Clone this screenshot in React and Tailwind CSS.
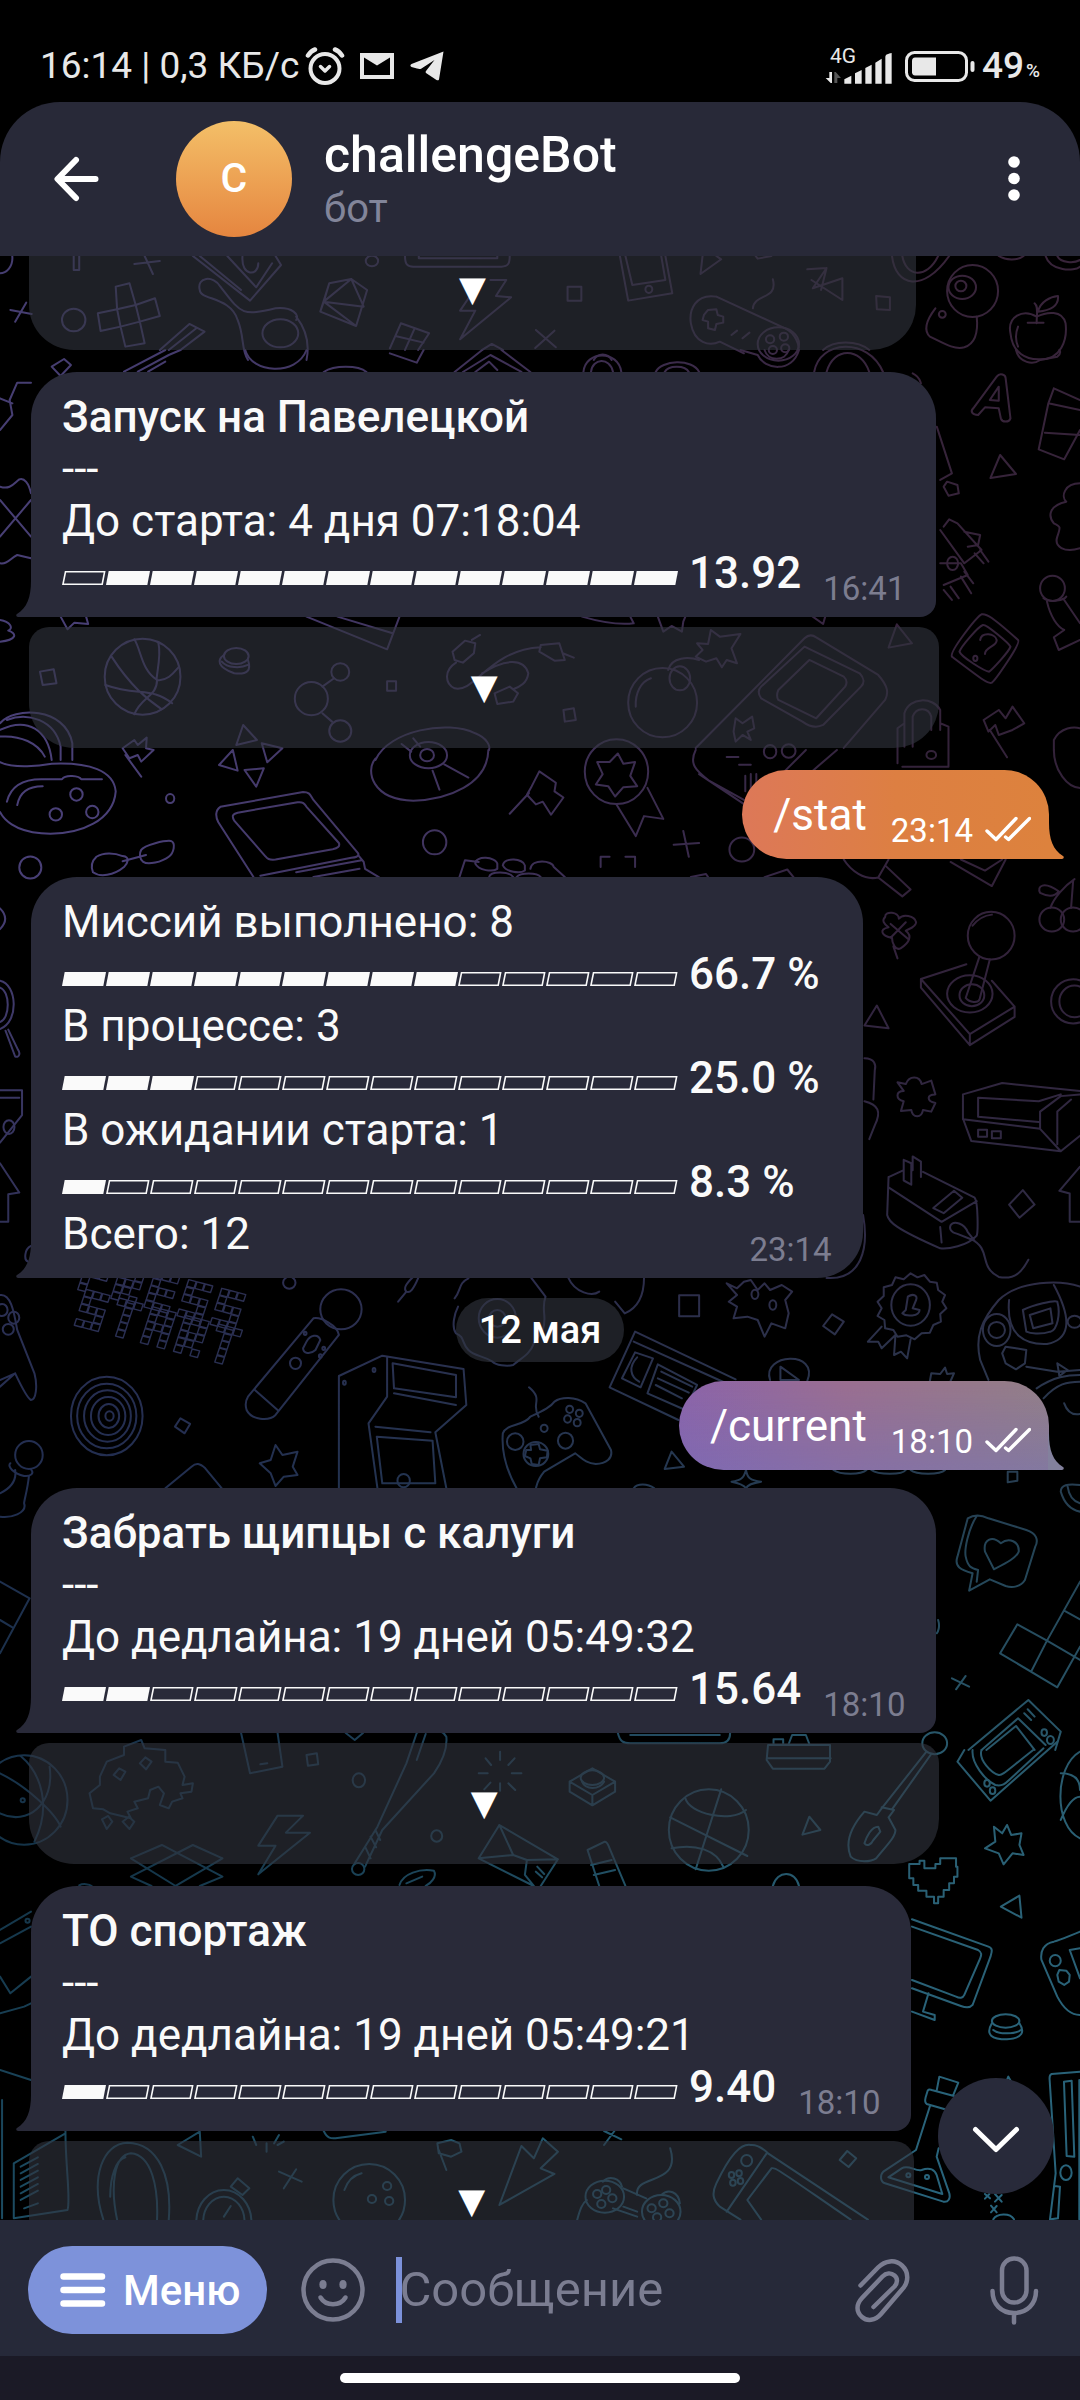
import React from "react";

/* Wallpaper doodles, grouped in horizontal bands. Each band has its own
   coordinate system: [offset x, offset y, scale x, scale y]. */
const BANDS = [
  {
    t: "translate(0 0) scale(0.6888 0.3333)",
    d: [
      "M107 768V810H115V768",
      "M195 792L232 783M210 768L222 822M15 930L46 942M38 908L22 965",
      "M280 768L363 902L408 795L400 768M290 768L350 870M330 768L372 862L395 790M352 770C350 830 375 830 375 790",
      "M588 768C588 795 592 800 600 800H728C738 800 740 790 740 768M608 768V775H722V768",
      "M900 768L912 902L976 880L966 768M908 768L918 855L966 840L960 768",
      "M1020 768L1017 822L1047 778L1040 768M1097 768L1100 776L1120 768",
      "M1172 808L1200 804L1180 865L1223 835V900L1178 840M1200 804L1192 870",
      "M1295 768C1300 860 1340 880 1378 768M1310 768C1315 830 1345 840 1362 768M1450 768C1460 782 1478 782 1486 768M1518 768C1525 815 1560 815 1568 800M1535 768C1540 790 1560 790 1568 780",
      "M1358 925C1345 960 1340 990 1350 1010C1370 1030 1385 1050 1400 1042C1418 1030 1420 990 1418 950",
      "M1505 950C1485 925 1462 950 1467 1000C1470 1060 1490 1080 1510 1078C1540 1080 1550 1020 1547 970C1542 930 1520 935 1505 950M1492 968H1515M1505 970C1505 940 1508 920 1502 910M1507 935C1510 905 1525 890 1536 888C1537 910 1530 930 1507 935M1478 1040C1474 1020 1474 1000 1478 980",
      "M168 860L188 850L197 915L225 895L232 948L203 965L210 1030L182 1040L175 980L146 993L142 940L170 928ZM170 928L175 980L203 965L197 915Z",
      "M290 870C285 830 310 825 320 860C350 940 350 950 400 925C425 920 435 945 430 960M290 870C290 900 335 890 345 960C355 1010 350 1050 360 1080M430 950C445 990 450 1030 445 1080",
      "M478 850L510 837L533 870L517 978L465 935ZM478 850L470 905L517 978M465 935L470 905L510 837L528 920L470 905",
      "M712 840H735L720 888L742 892L668 1018L690 932H668L685 880",
      "M824 860H844V902H824Z",
      "M1040 890C1010 880 1000 930 1003 970C1008 1030 1030 1040 1045 1025L1080 1060M1040 890L1140 985C1155 1000 1162 1040 1158 1050M1028 930L1040 928L1042 945L1050 950V968L1040 972L1038 990L1028 985V965L1020 960L1022 945ZM1093 925C1095 880 1130 900 1122 838M1062 1005L1070 992M1078 1015L1088 998",
      "M1272 888L1292 892V930L1273 928Z",
      "M582 970L623 1000L607 1050M582 970L566 1045M602 985L588 1050M574 1008L615 1028",
      "M778 990L807 1042M805 992L777 1044",
      "M232 1050L275 972L297 995L262 1050M245 1050L285 985",
      "M700 1050L714 1032L730 1050M1195 1050C1210 1020 1245 1020 1262 1050M862 1080C868 1058 882 1058 888 1080",
    ],
    e: [
      [0, 775, 18, 45], [540, 783, 9, 16], [942, 868, 5, 11], [1412, 873, 37, 78], [1397, 862, 20, 35], [1395, 858, 8, 16],
      [1368, 943, 5, 10], [107, 960, 17, 34], [407, 1000, 26, 42], [1130, 1032, 30, 50], [1118, 1018, 6, 12], [1138, 1010, 6, 12],
      [1122, 1050, 6, 12], [1140, 1045, 6, 12],
    ],
  },
  {
    t: "translate(0 350) scale(0.6888 0.3333)",
    d: [
      "M75 50L93 27L103 45L88 78Z",
      "M180 65L240 0M200 65L245 15L262 0M215 65L240 35",
      "M356 0C365 70 430 80 445 0M566 10L605 38L615 0",
      "M660 66L700 0M728 0L770 66M672 66L712 15L757 66M690 66L710 35L722 60",
      "M470 66C485 45 520 45 532 66M847 66C850 0 898 0 902 66M858 66C860 25 885 20 890 66M952 66C960 30 1005 25 1015 66M965 66C970 45 995 45 1000 66",
      "M1075 0L1100 15C1110 60 1150 70 1160 0M1110 0C1115 35 1140 35 1145 0",
      "M1182 66C1190 -30 1260 -40 1282 66M1200 66C1210 -10 1250 -10 1262 66",
      "M1447 80C1452 66 1460 75 1460 85L1467 205C1465 218 1455 218 1453 205L1450 175L1430 172L1420 195C1412 195 1408 185 1413 175ZM1450 110L1437 150L1450 152Z",
      "M1530 115L1568 150M1530 115L1522 160L1568 180M1522 160L1508 298L1545 328L1568 240M1517 248L1568 255",
      "M1452 315L1475 372L1438 384Z",
      "M1475 0C1480 40 1500 45 1510 30L1535 20C1542 10 1538 0 1538 0",
      "M0 240L18 195L14 150L25 98H45M0 145L18 160",
      "M0 410C15 420 20 400 28 388C35 382 42 400 45 430M0 450L45 560M0 560L45 450M0 640C10 645 15 625 25 615L45 625",
      "M1325 70C1335 80 1335 90 1337 100M1360 230L1382 370L1365 390M1375 395L1390 405L1392 430L1377 437L1370 410Z",
      "M1370 530L1378 508L1390 520L1425 600L1400 640L1365 540M1400 545L1423 555L1420 585L1405 590M1365 640H1395L1405 675L1370 705M1415 610L1428 640M1423 600L1435 635M1395 680L1410 730M1400 665L1413 700M1370 720L1382 750M1380 710L1392 745",
      "M1568 400C1545 400 1540 440 1548 455C1525 465 1520 495 1530 520C1540 530 1540 530 1535 560C1530 590 1545 610 1568 595",
      "M1515 745C1525 760 1545 750 1548 740M1520 755C1525 800 1535 830 1545 840L1530 862L1537 900L1568 870M1545 750L1568 820",
      "M1425 793C1432 790 1440 800 1478 870C1483 880 1445 990 1440 998C1435 1003 1430 995 1382 920C1378 905 1418 800 1425 793ZM1427 825C1432 822 1465 880 1467 890C1465 905 1440 960 1436 965C1430 965 1395 920 1393 905C1395 890 1420 830 1427 825ZM1423 870C1425 845 1445 850 1447 870C1448 890 1430 890 1430 912",
      "M195 868C205 900 205 960 228 990C228 1040 205 1040 195 1093M162 920C190 1010 215 1050 235 1078M153 1005C200 1040 220 1010 250 1060M230 880C235 920 225 990 228 990C245 995 255 960 260 950",
      "M325 915C315 930 315 950 340 970C360 975 365 960 360 930M322 935C330 955 350 955 360 945",
      "M58 965L78 958L82 1000L62 1005Z",
      "M445 800L562 898L580 800M490 800L570 850M88 800L98 838L108 818L128 822L125 800M0 810C15 815 20 835 12 842C25 850 25 870 0 875",
      "M485 985L468 1010M468 1090L482 1115M562 994H575V1022H562Z",
      "M662 938C645 960 645 1000 660 1015C690 1030 710 900 785 892M700 970C730 930 760 920 767 970C765 1000 755 1010 745 1018M660 930L657 905L675 872L690 880L688 910L672 938ZM685 870L697 855M785 885L812 880L820 930L805 932L783 905ZM817 910L833 923M740 1010L752 1030L745 1055L722 1062L718 1030Z",
      "M818 1080L833 1075L836 1110L820 1115Z",
      "M923 1070C922 1030 930 995 945 985M970 960C975 920 1000 920 1015 930M1010 920L1020 900L1012 880L1028 882L1032 840L1045 860L1075 852L1062 895L1070 940L1055 930L1048 952L1040 925L1025 935Z",
      "M955 800L963 845L975 828L990 845L992 815L995 800M845 800C870 815 900 825 920 820L915 800M1180 800L1195 822L1198 800M1302 823L1324 880L1290 893Z",
      "M1225 1194L1285 1050C1290 1030 1290 1010 1275 975L1185 862C1178 852 1172 857 1168 865L1010 1194",
      "M1168 890L1248 970C1255 985 1255 1000 1250 1010L1195 1125C1185 1135 1175 1130 1165 1115L1105 1045C1100 1030 1100 1020 1105 1010ZM1175 930L1225 980C1230 990 1230 1000 1227 1010L1185 1105L1130 1050C1127 1040 1128 1030 1130 1020Z",
      "M1068 1105L1078 1120L1092 1100L1095 1135L1085 1145L1090 1170L1078 1155L1068 1175L1065 1145Z",
      "M1303 1240V1135L1313 1120M1313 1190V1090C1320 1040 1355 1040 1365 1080V1140M1325 1190V1100C1330 1070 1348 1070 1352 1100V1140M1365 1120L1377 1130V1250H1310",
      "M1428 1110L1450 1080L1460 1105L1470 1070L1487 1120L1470 1140L1450 1155L1445 1125L1435 1145ZM1437 1140L1462 1222",
      "M1530 1170C1540 1130 1560 1130 1568 1135M1530 1170V1200",
      "M0 1120C20 1070 95 1070 105 1180V1230M10 1110C40 1085 80 1110 88 1190V1230M0 1140C40 1100 70 1140 75 1230M0 1160C30 1155 55 1180 65 1220",
      "M178 1195L195 1170L200 1185L213 1163L212 1195L223 1200L205 1235L200 1215L188 1225ZM182 1215L205 1280",
      "M353 1125L373 1170L343 1185ZM380 1180L410 1195L388 1237ZM338 1200L318 1245L345 1262ZM355 1260L383 1255L372 1310Z",
      "M545 1230C565 1140 650 1110 690 1150C708 1165 712 1190 710 1200M583 1182L597 1205M600 1165L610 1190",
    ],
    e: [
      [1383, 640, 8, 20], [1528, 715, 18, 38], [1416, 925, 3, 8], [207, 980, 55, 114], [343, 918, 18, 24], [494, 966, 13, 26],
      [452, 1046, 24, 50], [494, 1143, 16, 32], [962, 1058, 50, 104], [987, 985, 15, 36], [1118, 1205, 9, 20], [1145, 1203, 10, 20],
      [1352, 1215, 7, 12],
    ],
  },
  {
    t: "translate(0 750) scale(0.6888 0.3444)",
    d: [
      "M0 35C20 55 60 45 75 40C130 35 165 60 168 120C165 200 120 250 60 242C20 235 5 200 0 180M10 150C15 110 30 85 60 85H90C95 70 115 75 118 85H148M25 160C28 125 40 105 62 105",
      "M320 165L440 122C450 122 450 130 455 145L520 300C522 310 515 312 510 313L378 365M320 165C312 175 313 195 317 210L368 369M345 182L432 152C440 150 442 155 445 165L492 270C494 280 490 285 483 288L400 318C390 320 388 315 385 308L340 205C336 190 338 186 345 182ZM520 305L528 325L530 345L550 369M430 355L525 320M455 369L522 345",
      "M140 310C150 298 165 298 178 308C190 310 185 330 180 340C165 365 145 370 135 355C132 340 132 325 140 310ZM205 290C210 275 240 262 248 264C256 270 252 300 245 310C235 325 215 335 208 325C202 315 202 300 205 290ZM178 323L212 305",
      "M545 25C530 60 540 145 600 147C650 145 708 100 709 0M628 60L638 115M645 42L680 80",
      "M783 62L807 95L805 120L818 138L800 188L788 150L778 158L765 130L772 105ZM768 125L740 185",
      "M897 10L905 40L922 35L915 75L925 105L905 108L893 135L883 105L865 100L875 70L867 35L885 35ZM895 158L923 250L935 192L963 200L940 110",
      "M1010 0C1000 40 1010 60 1030 90L1080 145M1015 70L1090 170M1055 20H1072M1073 43H1090M1082 75V120M1090 70V120M1098 70V110M1140 60L1170 0M1180 60L1215 0",
      "M667 369L675 320L695 325M690 330C690 305 720 310 722 330V345C715 355 695 350 690 330M730 335C732 310 760 315 762 335V350C755 360 735 355 730 335M770 345C772 315 802 320 804 340L820 369M710 369C712 350 740 352 745 369M750 369C755 355 780 355 785 369",
      "M872 340V310H885M908 310H922V340M978 275L1015 270M992 235L1000 310M1003 369L1025 360L1028 369M1110 369L1143 347L1152 369",
      "M1225 318C1235 350 1255 380 1275 370L1290 318M1275 370L1310 425L1322 405L1285 335M1380 325L1440 395L1460 318M1395 318L1430 350L1455 318",
      "M1530 0C1530 60 1550 110 1568 110",
      "M1525 458C1530 430 1545 395 1560 375M1555 458L1558 380M1537 410C1515 380 1505 395 1510 415C1520 425 1530 430 1537 410",
      "M1285 485C1285 465 1305 470 1305 490C1310 475 1328 480 1330 500C1330 515 1318 520 1315 525C1325 540 1320 560 1308 575C1300 585 1295 560 1295 545C1280 540 1275 520 1290 515C1283 505 1280 495 1285 485ZM1297 570L1303 605M1293 505L1318 548M1315 500L1293 545",
      "M1422 600L1402 720C1408 735 1420 735 1422 725L1437 608M1337 665L1403 622M1440 670L1473 745L1408 825L1337 665V690L1408 857L1473 775V745M1408 825V857M1412 510C1420 490 1430 480 1440 478",
      "M1273 742L1290 808L1255 800Z",
      "M0 460C10 480 10 500 0 520M0 670C25 680 28 790 0 810M0 690C15 700 15 780 0 790M8 815L22 890C28 895 30 880 26 870L12 812",
      "M0 988H32V1060L0 1140M0 1010H28",
      "M1303 965L1315 970C1320 945 1335 945 1338 970L1352 960L1358 1000C1345 1000 1345 1020 1358 1025L1352 1050L1340 1045C1338 1070 1325 1070 1323 1045L1308 1048L1312 1020C1300 1015 1300 990 1312 990Z",
      "M1255 895C1270 895 1272 915 1270 930L1268 1015M1255 1020C1275 1030 1280 1050 1270 1090L1262 1130",
      "M1398 1000L1455 967L1568 990M1398 1000V1070L1410 1135L1540 1165L1568 1120M1398 1072L1510 1100L1540 1165M1510 1100V1050L1540 1005L1568 1000M1420 1010L1508 1020L1540 1000M1420 1010V1065L1508 1080M1535 1145V1050L1555 1015M1420 1103H1433V1123H1420ZM1440 1107H1453V1127H1440Z",
      "M1290 1240L1312 1220M1340 1225L1415 1300C1420 1310 1420 1400 1418 1410C1405 1440 1375 1450 1365 1447C1300 1390 1290 1370 1288 1350L1290 1240M1290 1270L1367 1370L1418 1310M1312 1250V1190L1323 1200V1262L1312 1250M1325 1220V1180L1337 1195V1240M1365 1385L1367 1430M1355 1330L1385 1280L1397 1300L1370 1345ZM1380 1380C1385 1365 1400 1375 1405 1400L1415 1425L1390 1405C1380 1400 1378 1390 1380 1380M1410 1420C1440 1450 1420 1500 1450 1530C1475 1540 1485 1510 1493 1480",
      "M1465 1320L1485 1278L1502 1320L1480 1358ZM0 1200L28 1285L12 1290V1370H0M1568 1210L1538 1280L1553 1288V1370H1568",
      "M1200 1533C1250 1540 1262 1450 1253 1350M45 1440C35 1450 35 1480 40 1485",
    ],
    e: [
      [111, 129, 9, 18], [81, 187, 9, 18], [134, 180, 9, 18], [247, 141, 6, 13], [44, 341, 16, 32], [622, 15, 27, 38],
      [620, 15, 10, 18], [895, 63, 46, 94], [631, 268, 17, 35], [1077, 289, 18, 35], [1527, 492, 18, 35], [1558, 492, 18, 35],
      [1439, 539, 34, 69], [1408, 708, 33, 54], [1411, 712, 18, 32], [1558, 730, 32, 64], [1560, 730, 22, 46], [13, 1095, 8, 20],
    ],
  },
  {
    t: "translate(0 1270) scale(0.6888 0.3333)",
    d: [
      "M608 20C600 60 595 70 590 65C585 55 590 40 600 20M590 65L578 95",
      "M0 75C15 70 20 120 25 180L50 310C55 350 52 390 45 390C40 385 30 345 22 310L0 350M0 330L22 310",
      "M262 445L276 462L268 490L254 470Z",
      "M455 145C465 140 490 165 492 195L400 435C390 455 365 450 358 420C355 400 357 390 360 380ZM370 360L403 420M445 215C450 195 462 190 465 210L458 240C450 255 440 250 440 235Z",
      "M15 580C10 590 20 610 35 618C45 620 50 610 45 598M22 600C25 640 10 660 0 670M42 618C40 660 35 690 35 700C40 730 15 745 0 740",
      "M492 655V318L555 257L673 297L677 405L632 487L648 655M562 262V380L535 460L548 655M570 280L662 315V382L572 355ZM572 370L662 405M545 470L625 487M547 500L628 512L632 640H555Z",
      "M400 525L410 555L432 545L425 590L432 615L412 620L400 648L393 610L377 580L393 570Z",
      "M240 655L278 590C285 578 290 580 298 595L322 655",
      "M750 655C735 600 728 540 730 490C735 460 760 470 770 440C790 420 800 410 805 395C815 380 835 380 850 400L887 540C890 565 880 582 865 582C850 580 845 565 835 550L790 605C780 630 780 640 778 655M768 352C790 390 770 400 782 440M770 525L782 522L784 538L795 542L794 562L784 565L782 585L772 582L770 565L762 558L764 540L771 540Z",
      "M660 85C670 60 665 40 680 25M770 20L792 80C785 120 795 140 788 180L775 220C770 250 760 260 745 285C735 290 720 285 715 275C700 255 690 260 680 240C670 220 675 200 662 190C655 170 660 130 665 110",
      "M825 23C835 70 860 80 870 65M907 130C930 110 935 60 935 23M893 95L907 130M986 76H1015V139H986Z",
      "M985 450L885 352L922 185L1068 328M920 215L1060 345M922 247L948 265L930 352L903 325ZM925 262C912 290 915 320 928 335M955 283L1012 345L995 420L940 370ZM960 305L1005 350M955 325L1000 368M952 345L990 385",
      "M1055 40L1070 55L1080 35L1090 30L1100 60L1110 40L1118 60L1135 45L1150 65L1140 90L1145 130L1140 175L1120 160L1110 200L1100 150L1085 140L1065 145L1070 110L1058 95L1070 75Z",
      "M1208 133L1225 155L1212 193L1195 168Z",
      "M1322 10L1332 22L1342 15L1350 35L1360 38L1362 60L1372 75L1368 95L1374 115L1365 132L1366 155L1355 165L1350 188L1338 190L1328 208L1316 196L1303 200L1297 180L1285 175L1284 150L1274 138L1280 115L1274 95L1283 78L1283 52L1295 45L1300 22L1312 28ZM1280 170L1260 215L1275 215L1280 235L1300 195L1298 255L1308 245L1317 265L1322 208M1318 80C1325 70 1333 75 1330 90L1325 115L1335 120C1335 140 1315 140 1310 130L1315 120Z",
      "M1435 330L1423 270C1415 200 1425 150 1450 90C1480 30 1540 30 1568 50M1465 90C1460 200 1490 225 1520 222C1550 210 1560 160 1530 45M1485 120C1500 105 1530 90 1535 95C1540 130 1535 180 1525 185C1510 195 1495 190 1490 185ZM1495 135L1525 115L1528 160L1500 175ZM1460 230L1475 235L1490 240L1488 280L1475 298L1460 280L1455 250ZM1490 290L1535 305L1568 300M1535 280L1550 300L1538 318Z",
      "M1505 355C1530 320 1550 315 1568 315M1515 385C1535 340 1550 335 1568 335M1545 400C1550 430 1560 435 1568 432",
      "M1118 330C1105 250 1190 240 1172 333M1133 290L1160 330H1133ZM1350 333L1352 310L1365 312L1372 293L1375 312L1385 310L1380 333",
      "M975 545L993 590L965 597ZM1083 600C1085 625 1090 632 1105 635C1090 640 1085 645 1083 655C1080 645 1075 640 1062 635C1075 632 1080 625 1083 600M920 655C925 640 940 640 950 655",
      "M1210 600C1220 615 1250 615 1258 600M1265 600C1275 615 1310 615 1315 600M1322 600C1330 615 1365 615 1372 600M1463 605H1477V632L1463 637Z",
      "M1568 645C1550 640 1540 645 1540 665C1545 700 1555 720 1568 725M1550 650C1552 680 1560 695 1568 700",
      "M1405 745C1415 732 1425 735 1435 745L1490 780C1505 790 1508 810 1503 830L1488 930C1482 950 1470 955 1460 948L1437 928L1407 962L1412 910C1395 900 1385 890 1390 860ZM1418 738C1405 780 1400 840 1402 860C1405 890 1410 895 1420 900L1418 935M1443 898L1430 845C1427 810 1440 795 1453 820C1465 800 1480 815 1479 845C1475 865 1460 880 1443 898Z",
      "M1568 935L1520 1112L1477 1063L1452 1150L1535 1252L1568 1130M1520 1112L1497 1205M1545 1022L1568 1048M1520 1112L1568 1170",
      "M1382 1225L1407 1250M1402 1218L1388 1258",
      "M1406 1440L1493 1290L1540 1385L1532 1440M1425 1440L1478 1345L1518 1425M1432 1440L1475 1368L1502 1440M1487 1330L1497 1350M1492 1318L1502 1340",
      "M0 935L43 985L0 1150M0 1050L18 1072M1362 1050C1365 1070 1362 1085 1360 1090",
    ],
    e: [
      [420, 38, 9, 18], [3, 120, 8, 18], [20, 143, 8, 18], [12, 178, 8, 16], [155, 438, 52, 118], [155, 438, 43, 97],
      [156, 438, 34, 77], [157, 438, 25, 57], [158, 438, 15, 36], [159, 438, 6, 14], [495, 118, 30, 60], [429, 280, 8, 17],
      [465, 258, 2, 5], [443, 190, 2, 5], [470, 235, 2, 5], [42, 555, 20, 42], [586, 632, 9, 20], [543, 300, 2, 6],
      [500, 338, 2, 6], [748, 515, 12, 25], [821, 512, 11, 24], [790, 475, 5, 11], [827, 418, 5, 11], [841, 430, 5, 11],
      [824, 447, 5, 11], [838, 458, 5, 11], [778, 552, 18, 36], [722, 145, 27, 58], [722, 145, 12, 25], [1096, 73, 5, 14],
      [1122, 105, 5, 14], [1322, 105, 28, 62], [1447, 180, 20, 48], [1447, 180, 12, 24], [1560, 155, 10, 18], [1516, 1388, 4, 10],
      [1525, 1410, 5, 12],
    ],
  },
  {
    t: "translate(0 1730) scale(0.6888 0.3333)",
    d: [
      "M205 30L210 55L240 60V95L258 98L268 140L265 165L280 160L278 185L262 190L265 205L250 215L245 235L232 225L238 190L230 170L218 180L215 205L195 215L200 235L185 245L190 265L160 250L150 238L135 235L130 190L145 165V140L155 95L180 75V50ZM165 135L173 115L182 125L175 150ZM203 100L211 82L220 95L212 118ZM148 268L157 258L163 275L155 297ZM178 275L187 260L195 275L188 297Z",
      "M0 250C40 290 80 220 72 110M0 130C40 170 80 250 88 290M30 78C60 130 75 230 50 335",
      "M350 9L363 130L410 110L403 9M378 103L388 100M445 75L460 70L462 103L447 107ZM502 9L515 30L527 9",
      "M605 9C612 -5 640 -10 648 20C650 60 640 100 630 130L555 300L530 410M605 9L590 100L548 290L515 400M545 300L552 330M538 320L546 352M530 350L538 385M605 90L618 12",
      "M403 257H440L415 308H450L375 433L400 347H375Z",
      "M190 385L235 345L323 440L290 468M323 385L280 345L190 440L220 468M190 385L255 468L323 385",
      "M726 65V90M726 160V182M695 130H708M743 130H757M705 85L713 105M747 85L738 105M703 178L712 158M748 180L738 160",
      "M785 468L810 388L725 285L695 385L775 468M695 385L745 375L725 285M745 375L765 390L810 388M765 390L762 435L775 468M780 410L790 432M778 425L787 442",
      "M580 465C585 430 610 415 630 422C635 440 625 460 618 468M590 460L613 440",
      "M870 468L853 360L878 335C882 335 883 345 885 355L908 468M858 405L888 390M862 435L893 420",
      "M827 155L860 115L893 155V185L860 226L827 185ZM827 155L860 195L893 155M860 195V226M845 155C850 180 870 180 877 155",
      "M1047 178L1010 418M973 262L1085 378M995 205C1000 250 1060 280 1083 240M975 355C1010 340 1040 360 1050 410",
      "M1175 260L1191 300L1165 314Z",
      "M1115 45H1205V95L1197 116H1122L1113 90ZM1113 85H1206M1123 45V28H1137V42M1145 42L1150 15H1170L1175 42M897 9C900 35 905 40 915 40H1045C1055 40 1060 30 1060 9M915 15H1045",
      "M1345 65L1280 235M1352 72L1295 238M1280 232L1298 240L1290 262M1280 235L1273 255L1255 245C1240 280 1225 330 1235 380C1245 400 1265 395 1272 385C1290 340 1300 320 1300 300L1290 262M1275 290C1265 290 1258 320 1255 340C1258 350 1265 345 1268 330L1278 305Z",
      "M1400 60L1390 95L1438 212L1535 35M1412 60C1410 100 1430 150 1445 165C1455 170 1460 160 1465 150L1515 55M1425 60C1420 90 1440 130 1450 135C1455 137 1460 125 1500 60",
      "M1568 65C1530 110 1530 290 1568 325M1540 130C1560 130 1568 150 1568 180M1540 270C1550 220 1560 200 1568 200",
      "M1462 285L1468 315L1483 310L1480 345L1486 375L1470 370L1457 403L1450 370L1430 355L1445 335L1443 290L1455 310Z",
      "M1320 420V402H1335V392H1342V415H1358V402H1365V385H1388V410H1390V440H1385V460H1378V480H1370V500H1362V520H1356V500H1345V482H1333V465H1326V445H1320Z",
      "M1480 497L1483 563L1453 530ZM1122 468C1128 420 1155 420 1160 468",
      "M1324 568L1435 650C1442 655 1440 665 1438 680L1412 825C1408 835 1400 832 1395 828L1324 775M1324 590L1420 660C1426 668 1425 675 1423 685L1400 795C1398 805 1393 805 1388 800L1324 750M1348 790L1340 845L1357 855V870L1324 845",
      "M1568 605C1550 620 1540 630 1530 635C1515 640 1510 665 1512 690L1535 800C1545 840 1555 855 1568 855M1568 655L1553 660L1568 745M1538 720L1548 722L1553 735L1552 755L1545 765L1537 755L1535 735Z",
      "M1440 880C1430 915 1440 928 1462 928C1485 925 1488 905 1480 880M1442 900C1450 915 1475 912 1482 900",
      "M0 600L45 545M0 640L45 590M0 740L15 790L45 740M0 850L35 830L45 820M0 1020L45 1050M115 466C120 460 130 462 133 468",
    ],
    e: [
      [35, 210, 63, 134], [33, 211, 3, 6], [521, 151, 9, 21], [520, 417, 9, 18], [634, 318, 8, 17], [860, 143, 17, 22],
      [1029, 300, 58, 122], [1357, 40, 18, 33], [1433, 160, 4, 10], [1441, 182, 4, 10], [1532, 692, 8, 17], [1460, 873, 20, 20],
      [40, 572, 3, 6],
    ],
  },
  {
    t: "translate(0 2100) scale(0.6888 0.3333)",
    d: [
      "M3 0V355M20 190L95 100M20 190V355L98 330C103 300 95 200 95 93M30 200L55 172M30 220L55 192M30 240L55 212M30 260L55 232M30 280L55 252M30 300L55 272M35 325L55 310",
      "M150 359C130 230 150 130 185 128C230 130 250 230 245 359M170 359C160 260 165 165 190 160C220 165 230 260 228 359M160 290C160 230 168 180 182 172",
      "M290 95L258 135L292 170ZM387 130V155M367 110L372 135M405 105L398 130M412 125L403 135",
      "M325 350L335 318M335 260L345 235L362 265L352 285Z",
      "M405 215L438 245M430 208L412 265M500 270C505 240 515 225 525 220",
      "M635 130L655 120L667 130L670 155L655 170L637 160ZM637 150L648 210M470 93C475 115 480 117 490 114L560 95M877 93L902 118M892 93L877 135",
      "M757 138L775 175L788 115L810 155L785 205L805 222L725 315Z",
      "M838 359C842 330 845 310 852 300M905 265L938 295M875 245C885 225 900 235 903 260M960 285C970 265 985 275 987 310M925 285C920 220 990 260 973 145M890 325L925 350M905 320L925 335",
      "M1090 135C1075 130 1060 165 1040 250C1033 280 1035 300 1045 320L1075 359M1090 135C1100 133 1110 150 1115 160L1260 359M1113 160L1055 335M1120 205C1125 200 1130 210 1235 359M1120 205L1085 300L1105 359",
      "M1230 153L1243 175L1232 201L1219 180Z",
    ],
    e: [
      [325, 365, 40, 95], [325, 365, 30, 75], [536, 300, 52, 108], [562, 258, 6, 12], [540, 297, 6, 12], [565, 303, 6, 12],
      [878, 290, 28, 48], [960, 335, 28, 50], [880, 270, 6, 12], [867, 282, 6, 12], [889, 295, 6, 12], [873, 312, 6, 12],
      [963, 310, 6, 12], [946, 325, 6, 12], [972, 340, 6, 12], [954, 352, 6, 12], [1084, 182, 8, 17], [1062, 225, 4, 9],
      [1073, 220, 4, 9], [1064, 248, 4, 9], [1075, 243, 4, 9],
    ],
  },
  {
    t: "translate(830 2060) scale(0.3333 0.3333)",
    d: [
      "M345 148L290 132C284 128 285 120 287 112L293 92C296 88 300 88 305 90L372 108M320 92L328 50L385 68L370 105M300 138L258 270L160 335C150 345 150 365 165 370L340 425C355 428 362 415 358 400L320 290L326 265",
      "M175 352L215 325C235 312 255 335 275 330C300 320 315 330 320 345L337 402Z",
      "M465 402L480 415M478 402L465 416M495 402L515 425M515 405L495 425M483 437L500 457M500 438L483 457M490 478C500 460 540 458 552 478M535 50L530 62M535 50L542 62",
      "M750 35L665 42C658 44 658 50 659 60L677 340L660 478M702 65L725 62L733 290L710 288ZM675 378L690 380L684 475L662 478M748 60V478",
    ],
    e: [[235, 346, 6, 6], [291, 351, 6, 6], [708, 338, 17, 22]],
  },
];

/* Pixel-block lettering of the wallpaper, row by row. */
const BLOCKS = [
  { m: "matrix(12 6.5 -3.5 22 130 -49)", rows: ["111.111.111.111.111", "1.1.1.1.1...1...1..", "111.111.111.111.111", "1...11..1.....1...1", "1...1.1.111.111.111"] },
  { m: "matrix(12 6.5 -3.5 22 125 58)", rows: ["111.111.111.111.111", "1....1..1.1.1.1..1.", "111..1..111.111..1.", "..1..1..1.1.11...1.", "111..1..1.1.1.1..1."] },
];

function Wallpaper() {
  return (
    <svg className="absolute inset-0 h-full w-full" viewBox="0 256 1080 1964" preserveAspectRatio="xMidYMin slice" aria-hidden="true">
      <defs>
        <linearGradient id="wl" x1="0" y1="0" x2="0" y2="1">
          <stop offset="0" stopColor="#453d70" />
          <stop offset="0.3" stopColor="#4a4078" />
          <stop offset="0.5" stopColor="#2f3055" />
          <stop offset="0.62" stopColor="#222e50" />
          <stop offset="0.82" stopColor="#143448" />
          <stop offset="1" stopColor="#1c4c62" />
        </linearGradient>
        <linearGradient id="wr" x1="0" y1="0" x2="0" y2="1">
          <stop offset="0" stopColor="#38243a" />
          <stop offset="0.35" stopColor="#32223a" />
          <stop offset="0.52" stopColor="#2e2c46" />
          <stop offset="0.66" stopColor="#244456" />
          <stop offset="0.8" stopColor="#2a6074" />
          <stop offset="1" stopColor="#28647c" />
        </linearGradient>
        <linearGradient id="wf" x1="0" y1="0" x2="1" y2="0">
          <stop offset="0.1" stopColor="#000" />
          <stop offset="0.85" stopColor="#fff" />
        </linearGradient>
        <mask id="wside" maskUnits="userSpaceOnUse" x="0" y="256" width="1080" height="1964">
          <rect x="0" y="256" width="1080" height="1964" fill="url(#wf)" />
        </mask>
        <mask id="wlines" maskUnits="userSpaceOnUse" x="0" y="256" width="1080" height="1964">
          <g fill="none" stroke="#fff" strokeWidth="2" strokeLinecap="round" strokeLinejoin="round">
            {BANDS.map((b) => (
              <g key={b.t} transform={b.t}>
                {b.d.map((d) => (
                  <path key={d} d={d} vectorEffect="non-scaling-stroke" />
                ))}
                {b.e.map(([cx, cy, rx, ry]) => (
                  <ellipse key={`${cx}-${cy}-${rx}`} cx={cx} cy={cy} rx={rx} ry={ry} vectorEffect="non-scaling-stroke" />
                ))}
              </g>
            ))}
            <g transform="translate(0 1270) scale(0.6888 0.3333)">
              {BLOCKS.map((w) => (
                <g key={w.m} transform={w.m}>
                  {w.rows.flatMap((r, y) =>
                    [...r].map((c, x) =>
                      c === "1" ? <rect key={`${x}-${y}`} x={x} y={y} width="0.9" height="0.9" strokeWidth="1.4" vectorEffect="non-scaling-stroke" /> : null
                    )
                  )}
                </g>
              ))}
            </g>
          </g>
        </mask>
      </defs>
      <g mask="url(#wlines)">
        <rect x="0" y="256" width="1080" height="1964" fill="url(#wl)" />
        <rect x="0" y="256" width="1080" height="1964" fill="url(#wr)" mask="url(#wside)" />
      </g>
    </svg>
  );
}

function Bar({ cells, label }) {
  return (
    <svg className="mb-[13px] h-4 w-[616px] shrink-0" viewBox="0 0 616 16" role="img" aria-label={label}>
      {[...cells].map((c, i) =>
        c === "1" ? (
          <path key={i} transform={`translate(${i * 44} 0)`} d="M0 15L2.7 1H44L41.3 15Z" fill="#fafafa" />
        ) : (
          <path key={i} transform={`translate(${i * 44} 0)`} d="M1 14.2L3.5 1.8H42.6L40.2 14.2Z" fill="none" stroke="#fafafa" strokeWidth="1.6" />
        )
      )}
    </svg>
  );
}

function BarLine({ cells, value, children }) {
  return (
    <div className="flex h-[52px] items-end">
      <Bar cells={cells} label={value} />
      <b className="ml-[11px] font-medium">{value}</b>
      {children}
    </div>
  );
}

function Time({ children }) {
  return <time className="-mb-[6px] ml-auto pl-[22px] text-[33px] leading-[33px] text-[#7c7d90]">{children}</time>;
}

function InBubble({ short, children }) {
  return (
    <div
      className={
        short
          ? "relative w-fit rounded-t-[46px] rounded-br-[16px] bg-[#292a39] px-[31px] pb-[18px] pt-[19px] text-[44px] leading-[52px] text-[#fafafa]"
          : "relative w-fit rounded-t-[46px] rounded-br-[46px] bg-[#292a39] px-[31px] pb-[18px] pt-[19px] text-[44px] leading-[52px] text-[#fafafa]"
      }
    >
      {children}
      <svg className="absolute bottom-0 -left-[15px] h-9 w-4" viewBox="0 0 16 36" fill="#292a39" aria-hidden="true">
        <path d="M15 0C15 16 11 27 1 33C-0.5 34 0.5 36 2 36H16V0Z" />
      </svg>
    </div>
  );
}

function KeyButton() {
  return (
    <button className="-ml-[2px] -mr-[3px] mt-[10px] h-[121px] rounded-b-[45px] rounded-t-[20px] bg-[rgba(50,54,64,0.6)] font-['DejaVu_Sans'] text-[35px] text-white">
      ▼
    </button>
  );
}

function Mission({ title, left, cells, value, time }) {
  return (
    <div className="mt-[22px] flex w-fit flex-col">
      <InBubble short>
        <b className="block font-medium">{title}</b>
        <p>---</p>
        <p>{left}</p>
        <BarLine cells={cells} value={value}>
          <Time>{time}</Time>
        </BarLine>
      </InBubble>
      <KeyButton />
    </div>
  );
}

function OutBubble({ look, tail, text, time }) {
  return (
    <div className={look}>
      <span>{text}</span>
      <time className="-mb-[6px] ml-[24px] text-[33px] leading-[33px]">{time}</time>
      <svg className="mb-[-1px] ml-[12px] h-[26px] w-[46px]" viewBox="0 0 46 26" fill="none" stroke="#fff" strokeWidth="3.4" strokeLinecap="round" strokeLinejoin="round" aria-label="Прочитано">
        <path d="M2 15L11 23.5L31 2.5M20.5 21L23.5 23.5L44.500 2.5" />
      </svg>
      <svg className="absolute bottom-0 -right-[15px] h-9 w-4" viewBox="0 0 16 36" fill={tail} aria-hidden="true">
        <path d="M1 0C1 16 5 27 15 33C16.500 34 15.500 36 14 36H0V0Z" />
      </svg>
    </div>
  );
}

export default function App() {
  return (
    <div className="flex h-screen flex-col overflow-hidden bg-black font-[Roboto,sans-serif] text-white">
      <div className="flex h-[102px] shrink-0 items-center justify-between pl-[40px] pr-[40px] pt-[30px] text-[37px] font-medium text-[#e8e8e8]">
        <div className="flex items-center">
          <span className="font-normal">16:14 | 0,3 КБ/с</span>
          <svg className="ml-[5px] h-[38px] w-[42px]" viewBox="0 0 42 38" fill="none" stroke="#e8e8e8" strokeLinecap="round" strokeLinejoin="round" aria-hidden="true">
            <circle cx="21" cy="21.500" r="14.500" strokeWidth="4" />
            <path d="M16.500 19.500L21 24L25.500 19.500" strokeWidth="3.500" />
            <path d="M4 8.500C6 5.500 8 3.500 11 2.500M38 8.500C36 5.500 34 3.500 31 2.500" strokeWidth="4.500" />
          </svg>
          <svg className="ml-[14px] h-[26px] w-[34px]" viewBox="0 0 34 26" aria-hidden="true">
            <path fillRule="evenodd" fill="#e8e8e8" d="M0 0H34V26H0ZM4 4.500V22H30V4.500L17 12.500Z" />
          </svg>
          <svg className="ml-[16px] h-[30px] w-[34px]" viewBox="0 0 34 30" fill="#e8e8e8" aria-hidden="true">
            <path d="M33.500 0.500L29 28.500C28.500 29.500 27.500 29.600 26.500 29L16 22C15.500 21.300 15.500 20.500 16 20L24.500 9L11.500 17.500C10 18.300 8.500 18 7 17.500L1.500 16C0 15 0 14 1.500 13Z" />
          </svg>
        </div>
        <div className="flex items-center">
          <div className="relative h-9 w-[68px]">
            <span className="absolute left-[5px] top-[-4px] text-[21px] font-normal leading-[24px]">4G</span>
            <svg className="h-9 w-[68px]" viewBox="75 42 204 108" fill="#e8e8e8" aria-hidden="true">
              <path d="M88 114H96V147H92L77 132H88Z" />
              <path d="M103 147V114H107L123 132H112V147Z" fill="#555" />
              <path d="M133 149V136L154 125V149ZM165 149V118L185 108V149ZM196 149V102L215 92V149ZM226 149V86L245 74V149ZM256 149V68C258 60 264 60 275 57V149Z" />
            </svg>
          </div>
          <svg className="ml-[12px] h-[31px] w-[70px]" viewBox="0 0 70 31" aria-hidden="true">
            <rect x="1.500" y="1.500" width="60" height="28" rx="8" fill="none" stroke="#e8e8e8" strokeWidth="3" />
            <path d="M10 6.500H31V24.500H10C8 24.500 7 23 7 21.500V9.500C7 8 8 6.500 10 6.500Z" fill="#e8e8e8" />
            <rect x="65.500" y="10" width="4" height="11" rx="2" fill="#e8e8e8" />
          </svg>
          <span className="ml-[7px]">49</span>
          <span className="ml-[2px] pt-[11px] text-[19px]">%</span>
        </div>
      </div>

      <header className="flex h-[154px] shrink-0 items-center rounded-t-[60px] bg-[#282938] pl-[54px] pr-[54px]">
        <button aria-label="Назад">
          <svg className="h-[46px] w-[46px]" viewBox="0 0 46 46" fill="none" stroke="#fff" strokeWidth="6" strokeLinecap="round" strokeLinejoin="round">
            <path d="M41.500 23H4M22 4L3.500 23L22 42" />
          </svg>
        </button>
        <div className="ml-[76px] flex size-[116px] items-center justify-center rounded-full bg-linear-to-b from-[#f3bf68] to-[#e5853f] text-[41px] font-medium">C</div>
        <div className="ml-[32px] flex-1">
          <h1 className="text-[50px] font-medium leading-[60px]">challengeBot</h1>
          <p className="text-[40px] leading-[48px] text-[#82859a]">бот</p>
        </div>
        <button aria-label="Ещё">
          <svg className="h-[46px] w-[24px]" viewBox="0 0 24 46" fill="#fff">
            <circle cx="12" cy="6" r="5.800" />
            <circle cx="12" cy="22.500" r="5.800" />
            <circle cx="12" cy="39" r="5.800" />
          </svg>
        </button>
      </header>

      <main className="relative min-h-0 flex-1 overflow-hidden">
        <Wallpaper />
        <div className="relative -mt-[37px] pl-[31px] pr-[31px]">
          <div className="flex w-[882px] flex-col">
            <KeyButton />
          </div>
          <Mission title="Запуск на Павелецкой" left="До старта: 4 дня 07:18:04" cells="01111111111111" value="13.92" time="16:41" />
          <OutBubble
            look="relative mt-[22px] ml-auto flex w-fit items-end rounded-l-[45px] rounded-tr-[45px] bg-linear-to-r from-[#dd7858] via-[#dd7f42] to-[#dd823d] pb-[18px] pl-[31px] pr-[18px] pt-[19px] text-[44px] leading-[52px]"
            tail="#dd823d"
            text="/stat"
            time="23:14"
          />
          <div className="mt-[18px]">
            <InBubble>
              <div className="pr-[12px]">
                <p>Миссий выполнено: 8</p>
                <BarLine cells="11111111100000" value="66.7 %" />
                <p>В процессе: 3</p>
                <BarLine cells="11100000000000" value="25.0 %" />
                <p>В ожидании старта: 1</p>
                <BarLine cells="10000000000000" value="8.3 %" />
              </div>
              <div className="flex items-end">
                <p>Всего: 12</p>
                <Time>23:14</Time>
              </div>
            </InBubble>
          </div>
          <div className="mx-auto mt-[20px] h-[64px] w-fit rounded-full bg-[rgba(50,54,64,0.6)] px-[23px] text-[38px] font-medium leading-[64px]">12 мая</div>
          <OutBubble
            look="relative mt-[19px] ml-auto flex w-fit items-end rounded-l-[45px] rounded-tr-[45px] bg-[linear-gradient(to_top,rgba(112,112,190,0.45),rgba(112,112,190,0)),linear-gradient(to_right,#8c63a8,#9a6e90_45%,#937f86)] pb-[18px] pl-[31px] pr-[18px] pt-[19px] text-[44px] leading-[52px]"
            tail="#83819d"
            text="/current"
            time="18:10"
          />
          <div className="-mt-[4px]">
            <Mission title="Забрать щипцы с калуги" left="До дедлайна: 19 дней 05:49:32" cells="11000000000000" value="15.64" time="18:10" />
          </div>
          <Mission title="ТО спортаж" left="До дедлайна: 19 дней 05:49:21" cells="10000000000000" value="9.40" time="18:10" />
        </div>
        <button aria-label="Вниз" className="absolute bottom-[26px] right-[26px] flex size-[116px] items-center justify-center rounded-full bg-[#282a3a]">
          <svg className="mt-[8px] h-[28px] w-[48px]" viewBox="0 0 48 28" fill="none" stroke="#fff" strokeWidth="5" strokeLinecap="round" strokeLinejoin="round">
            <path d="M3.500 3.500L24 23.500L44.500 3.500" />
          </svg>
        </button>
      </main>

      <footer className="flex h-[136px] shrink-0 items-center bg-[#262939] pb-[4px] pl-[28px] pr-[40px] pt-[8px]">
        <button className="flex h-[88px] items-center rounded-full bg-[#7d92da] pl-[32px] pr-[27px] text-[42px] font-medium">
          <svg className="mr-[17px] h-[36px] w-[46px]" viewBox="0 0 46 36" stroke="#fff" strokeWidth="6.500" strokeLinecap="round" aria-hidden="true">
            <path d="M3.500 4.500H42M3.500 18H42M3.500 31.500H42" />
          </svg>
          Меню
        </button>
        <button className="ml-[34px]" aria-label="Эмодзи">
          <svg className="size-[64px]" viewBox="0 0 64 64" fill="none" stroke="#7b7d91" strokeWidth="4.500" strokeLinecap="round">
            <circle cx="32" cy="32" r="29.500" />
            <path d="M19.500 39.500C25 48.500 39 48.500 44.500 39.500" />
            <ellipse cx="22" cy="26.500" rx="3.600" ry="4.500" fill="#7b7d91" stroke="none" />
            <ellipse cx="42" cy="26.500" rx="3.600" ry="4.500" fill="#7b7d91" stroke="none" />
          </svg>
        </button>
        <span className="ml-[31px] h-[66px] w-[6px] shrink-0 bg-[#7c91da]" aria-hidden="true" />
        <input aria-label="Сообщение" placeholder="Сообщение" className="-ml-[3px] h-[70px] min-w-0 flex-1 bg-transparent text-[49px] text-white outline-none placeholder:text-[#7b7d91]" />
        <button aria-label="Прикрепить">
          <svg className="h-[66px] w-[60px]" viewBox="0 0 60 66" fill="none" stroke="#7b7d91" strokeWidth="4.500" strokeLinecap="round" strokeLinejoin="round">
            <path d="M6.500 28.500L24 10.500C31 3.500 41 2 48 8.500C55 15 55 25 48 32.500L27 57C21 64 13 64.500 8 60C2 54.500 2 47.500 8 41L28.500 19.500C32 16 37 15.500 40.500 18.500C44 21.500 43.500 26 40.500 29.500L19.500 50" />
          </svg>
        </button>
        <button aria-label="Голосовое сообщение" className="ml-[74px]">
          <svg className="h-[70px] w-[52px]" viewBox="0 0 52 70" fill="none" stroke="#7b7d91" strokeWidth="4.500" strokeLinecap="round">
            <rect x="14" y="3.500" width="24.500" height="44" rx="12" />
            <path d="M4.500 36C4.500 49 13 58 26 58S48 49 48 36M26 58V67.500" />
          </svg>
        </button>
      </footer>
      <div className="flex h-[44px] shrink-0 justify-center bg-[#1b1a26] pt-[17px]">
        <div className="h-[10px] w-[400px] rounded-full bg-white" />
      </div>
    </div>
  );
}
